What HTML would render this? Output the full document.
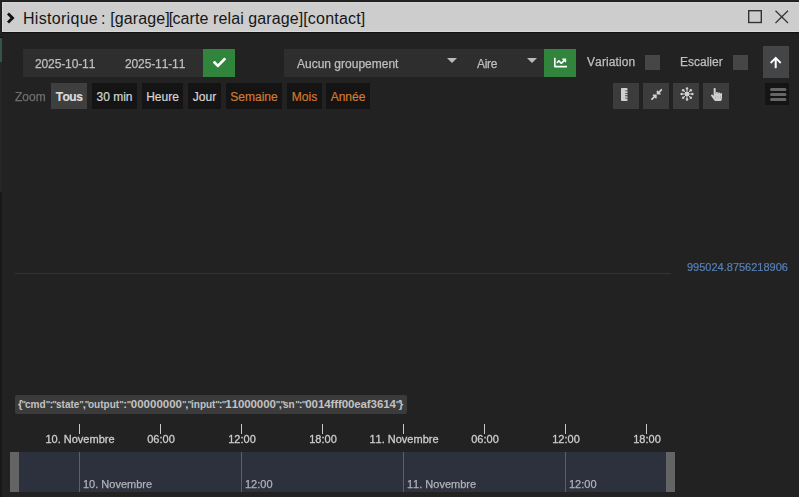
<!DOCTYPE html>
<html><head><meta charset="utf-8">
<style>
html,body{margin:0;padding:0;}
body{font-kerning:none;width:799px;height:497px;overflow:hidden;background:#222222;position:relative;font-family:"Liberation Sans",sans-serif;font-size:12px;color:#bfbfbf;}
.abs{position:absolute;}
#topb{left:0;top:0;width:799px;height:2px;background:linear-gradient(#242424 0,#242424 55%,#141414 100%);}
#leftb{left:0;top:0;width:2px;height:37px;background:linear-gradient(90deg,#242424 0,#242424 60%,#181818 100%);}
#sep{left:0;top:37px;width:2px;height:1px;background:#0c0c0c;}
#shadow{left:2px;top:32px;width:797px;height:2px;background:linear-gradient(#121212 0,#121212 50%,#1e1e1e 50%,#1e1e1e 100%);}
#teal{left:0;top:38px;width:2px;height:24px;background:#35524e;}
#leftb3{left:0;top:62px;width:2px;height:130px;background:#262626;}
#leftb2{left:0;top:192px;width:2px;height:305px;background:#181818;}
#title{left:2px;top:2px;width:797px;height:30px;background:#cdcdcd;box-sizing:border-box;border-left:1px solid #dadada;border-top:1px solid #d6d6d6;border-bottom:1px solid #d8d8d8;}
.box{background:#2e2e2e;}
.t{position:absolute;white-space:nowrap;font-size:12px;line-height:14px;will-change:transform;-webkit-text-stroke:0.25px;}
.t11{position:absolute;white-space:nowrap;font-size:11px;line-height:12px;will-change:transform;-webkit-text-stroke:0.2px;}
.zb{position:absolute;top:83px;height:26px;background:#141414;}
.zb span{-webkit-text-stroke:0.2px;position:absolute;left:0;right:0;top:7px;text-align:center;font-size:12px;line-height:14px;color:#d6d6d6;white-space:nowrap;}
.zb.o span{color:#d2792d;}
.ib{position:absolute;top:83px;height:26px;width:26px;background:#3c3c3c;}
.w{display:inline-block;transform:scaleX(0.87);transform-origin:0 50%;}
.q{font-size:9.5px;vertical-align:1.4px;font-style:normal;}
.tick{position:absolute;top:424px;width:1px;height:10px;background:#c8c8c8;}
.ax{-webkit-text-stroke:0.3px;will-change:transform;position:absolute;top:433px;width:100px;margin-left:-50px;text-align:center;white-space:nowrap;font-size:11px;line-height:12px;color:#cccccc;}
.ng{position:absolute;top:452px;width:1px;height:40px;background:#5a6070;}
.nl{-webkit-text-stroke:0.25px;will-change:transform;position:absolute;top:478px;white-space:nowrap;font-size:11px;line-height:12px;color:#b0b3b8;}
</style></head><body>
<div class="abs" id="topb"></div>
<div class="abs" id="leftb"></div>
<div class="abs" id="teal"></div>
<div class="abs" id="leftb2"></div>
<div class="abs" id="leftb3"></div>
<div class="abs" id="sep"></div>
<div class="abs" id="shadow"></div>
<div class="abs" id="title"></div>
<svg class="abs" style="left:6px;top:12px" width="10" height="12" viewBox="0 0 10 12"><path d="M2 1.5 L6.5 6 L2 10.5" fill="none" stroke="#111" stroke-width="2.9"/></svg>
<span class="abs" style="left:23px;top:9.5px;font-size:16px;line-height:17px;white-space:nowrap;color:#161616;letter-spacing:0.1px;"><span style="letter-spacing:0.3px">Historique</span><span style="margin-left:-1.5px"> : [garage</span><span style="letter-spacing:-0.8px">][</span>carte relai garage][<span style="letter-spacing:0.2px">contact</span>]</span>
<svg class="abs" style="left:747px;top:9px" width="16" height="16" viewBox="0 0 16 16"><rect x="1.7" y="1.7" width="12.6" height="11.8" fill="none" stroke="#333" stroke-width="1.4"/></svg>
<svg class="abs" style="left:774px;top:9px" width="16" height="16" viewBox="0 0 16 16"><path d="M1.5 1.7 L14 14 M14 1.7 L1.5 14" fill="none" stroke="#333" stroke-width="1.2"/></svg>

<!-- date range -->
<div class="abs box" style="left:23px;top:49px;width:180px;height:28px;"></div>
<span class="t" style="left:35px;top:57px;letter-spacing:-0.12px;">2025-10-11</span>
<span class="t" style="left:125px;top:57px;letter-spacing:-0.12px;">2025-11-11</span>
<div class="abs" style="left:203px;top:49px;width:32px;height:28px;background:#30843b;"></div>
<svg class="abs" style="left:212.5px;top:56px" width="13" height="13" viewBox="0 0 512 512"><path fill="#fff" d="M173.898 439.404l-166.4-166.4c-9.997-9.997-9.997-26.206 0-36.204l36.203-36.204c9.997-9.998 26.207-9.998 36.204 0L192 312.69 432.095 72.596c9.997-9.997 26.207-9.997 36.204 0l36.203 36.204c9.997 9.997 9.997 26.206 0 36.204l-294.4 294.401c-9.998 9.997-26.207 9.997-36.204-.001z"/></svg>

<!-- selects -->
<div class="abs box" style="left:284px;top:49px;width:260px;height:28px;"></div>
<span class="t" style="left:297px;top:57px;">Aucun groupement</span>
<div class="abs" style="left:447px;top:58px;width:0;height:0;border-left:5px solid transparent;border-right:5px solid transparent;border-top:5px solid #bcbcbc;"></div>
<span class="t" style="left:477px;top:57px;letter-spacing:-0.3px;">Aire</span>
<div class="abs" style="left:527px;top:58px;width:0;height:0;border-left:5px solid transparent;border-right:5px solid transparent;border-top:5px solid #bcbcbc;"></div>
<div class="abs" style="left:544px;top:49px;width:32px;height:28px;background:#30843b;"></div>
<svg class="abs" style="left:554px;top:56.2px" width="13" height="13" viewBox="0 0 512 512"><path fill="#fff" d="M496 384H64V80c0-8.84-7.16-16-16-16H16C7.16 64 0 71.16 0 80v336c0 17.67 14.33 32 32 32h464c8.84 0 16-7.16 16-16v-32c0-8.84-7.16-16-16-16zM464 96H345.94c-21.38 0-32.09 25.85-16.97 40.97l32.4 32.4L288 242.75l-73.37-73.37c-12.5-12.5-32.76-12.5-45.25 0l-68.69 68.69c-6.25 6.25-6.25 16.38 0 22.63l22.62 22.62c6.25 6.25 16.38 6.25 22.63 0L192 237.25l73.37 73.37c12.5 12.5 32.76 12.5 45.25 0l96-96 32.4 32.4c15.12 15.12 40.97 4.41 40.97-16.97V112c.01-8.84-7.15-16-15.99-16z"/></svg>
<span class="t" style="left:587px;top:55px;letter-spacing:0.1px;">Variation</span>
<div class="abs" style="left:645px;top:55px;width:15px;height:15px;background:#454648;"></div>
<span class="t" style="left:680px;top:55px;">Escalier</span>
<div class="abs" style="left:733px;top:55px;width:15px;height:15px;background:#454648;"></div>
<div class="abs" style="left:763px;top:46px;width:26px;height:32px;background:#444547;"></div>
<svg class="abs" style="left:770.2px;top:55.7px" width="11.4" height="13" viewBox="0 0 448 512"><path fill="#fff" d="M34.9 289.5l-22.2-22.2c-9.4-9.4-9.4-24.6 0-33.9L207 39c9.400-9.400 24.600-9.400 33.900 0l194.300 194.300c9.400 9.400 9.400 24.600 0 33.900L413 289.400c-9.500 9.500-25 9.300-34.300-.4L264 168.600V456c0 13.300-10.700 24-24 24h-32c-13.300 0-24-10.700-24-24V168.600L69.200 289.100c-9.300 9.800-24.800 10-34.300.4z"/></svg>

<!-- zoom row -->
<span class="t" style="left:15px;top:90px;color:#6e6e6e;">Zoom</span>
<div class="zb" style="left:51px;width:36px;background:#3f3f3f;"><span style="font-weight:bold;letter-spacing:-0.5px;color:#dcdcdc;">Tous</span></div>
<div class="zb" style="left:92px;width:45px;"><span>30 min</span></div>
<div class="zb" style="left:142px;width:41px;"><span>Heure</span></div>
<div class="zb" style="left:188px;width:33px;"><span>Jour</span></div>
<div class="zb o" style="left:226px;width:56px;"><span>Semaine</span></div>
<div class="zb o" style="left:287px;width:35px;"><span>Mois</span></div>
<div class="zb o" style="left:326px;width:44px;"><span>Année</span></div>

<div class="ib" style="left:613px;"></div>
<div class="ib" style="left:643px;"></div>
<div class="ib" style="left:673px;"></div>
<div class="ib" style="left:703px;"></div>
<svg class="abs" style="left:621px;top:88px" width="6.5" height="13" viewBox="0 0 256 512"><path fill="#d0d0d0" d="M168 416c-4.420 0-8-3.580-8-8v-16c0-4.420 3.580-8 8-8h88v-64h-88c-4.420 0-8-3.580-8-8v-16c0-4.420 3.580-8 8-8h88v-64h-88c-4.420 0-8-3.580-8-8v-16c0-4.420 3.580-8 8-8h88v-64h-88c-4.420 0-8-3.580-8-8v-16c0-4.420 3.580-8 8-8h88V32c0-17.670-14.330-32-32-32H32C14.330 0 0 14.330 0 32v448c0 17.670 14.330 32 32 32h192c17.670 0 32-14.330 32-32v-64h-88z"/></svg>
<svg class="abs" style="left:651px;top:87.8px" width="11.4" height="13" viewBox="0 0 448 512"><path fill="#d0d0d0" d="M4.686 427.314L104 328l-32.922-31.029C55.958 281.851 66.666 256 88.048 256h112C213.303 256 224 266.745 224 280v112c0 21.382-25.803 32.090-40.922 16.971L152 376l-99.314 99.314c-6.248 6.248-16.379 6.248-22.627 0L4.686 449.941c-6.248-6.248-6.248-16.379 0-22.627zM443.314 84.686L344 184l32.922 31.029c15.120 15.120 4.412 40.971-16.970 40.971h-112C234.697 256 224 245.255 224 232V120c0-21.382 25.803-32.090 40.922-16.971L296 136l99.314-99.314c6.248-6.248 16.379-6.248 22.627 0l25.373 25.373c6.248 6.248 6.248 16.379 0 22.627z"/></svg>
<svg class="abs" style="left:680px;top:87px" width="14" height="14" viewBox="-7 -7 14 14"><g fill="#d0d0d0" stroke="#d0d0d0"><circle r="2.3" stroke="none"/><g stroke-width="1"><path d="M0 -5.3V5.3M-5.300 0H5.300M-3.750 -3.750L3.750 3.750M-3.750 3.750L3.750 -3.750"/></g><g stroke="none"><circle cx="0" cy="-5.400" r="1.25"/><circle cx="0" cy="5.400" r="1.25"/><circle cx="5.400" cy="0" r="1.25"/><circle cx="-5.400" cy="0" r="1.25"/><circle cx="3.820" cy="3.820" r="1.25"/><circle cx="-3.820" cy="3.820" r="1.25"/><circle cx="3.820" cy="-3.820" r="1.25"/><circle cx="-3.820" cy="-3.820" r="1.25"/></g></g></svg>
<svg class="abs" style="left:710.6px;top:88px" width="11.4" height="13" viewBox="0 0 448 512"><path fill="#d0d0d0" d="M448 240v96c0 3.084-.356 6.159-1.063 9.162l-32 136C410.686 499.230 394.562 512 376 512H168a40.004 40.004 0 0 1-32.350-16.473l-127.997-176c-12.993-17.866-9.043-42.883 8.822-55.876 17.867-12.994 42.884-9.043 55.877 8.823L104 315.992V40c0-22.091 17.908-40 40-40s40 17.909 40 40v200h8v-40c0-22.091 17.908-40 40-40s40 17.909 40 40v40h8v-24c0-22.091 17.908-40 40-40s40 17.909 40 40v24h8c0-22.091 17.908-40 40-40s40 17.909 40 40zm-256 80h-8v96h8v-96zm88 0h-8v96h8v-96zm88 0h-8v96h8v-96z"/></svg>
<div class="abs" style="left:765px;top:83px;width:24px;height:22px;background:#141414;"></div>
<svg class="abs" style="left:765px;top:83px" width="24" height="22" viewBox="0 0 24 22"><path d="M6.5 6.5 H20 M6.5 11.5 H20 M6.5 16.5 H20" fill="none" stroke="#666" stroke-width="3" stroke-linecap="round"/></svg>

<!-- chart -->
<div class="abs" style="left:15px;top:273px;width:656px;height:1px;background:#333;"></div>
<span class="t11" style="left:687px;top:261px;color:#5680b8;">995024.8756218906</span>

<div class="abs" style="left:15px;top:394.5px;width:392px;height:19px;background:#3b3b3b;border-radius:2px;"></div>
<span class="abs" id="tip" style="left:18px;top:397px;white-space:nowrap;line-height:14px;font-size:11.5px;font-weight:bold;color:#c2c2c2;"><span style="letter-spacing:-0.9px">{<i class="q">&quot;</i></span><span class="w" style="width:20.58px">cmd</span><span style="letter-spacing:-0.9px"><i class="q">&quot;</i>:<i class="q">&quot;</i></span><span class="w" style="width:23.37px">state</span><span style="letter-spacing:-1.15px"><i class="q">&quot;</i>,<i class="q">&quot;</i></span><span class="w" style="width:31.12px">output</span><span style="letter-spacing:-0.4px"><i class="q">&quot;</i>:<i class="q">&quot;</i></span><span style="letter-spacing:0px">00000000</span><span style="letter-spacing:-1.15px"><i class="q">&quot;</i>,<i class="q">&quot;</i></span><span class="w" style="width:24.46px">input</span><span style="letter-spacing:-0.9px"><i class="q">&quot;</i>:<i class="q">&quot;</i></span><span style="letter-spacing:-0.1px">11000000</span><span style="letter-spacing:-1.5px"><i class="q">&quot;</i>,<i class="q">&quot;</i></span><span class="w" style="width:11.68px">sn</span><span style="letter-spacing:-0.9px"><i class="q">&quot;</i>:<i class="q">&quot;</i></span><span style="letter-spacing:-0.1px">0014fff00eaf3614</span><span style="letter-spacing:-1.5px"><i class="q">&quot;</i>}</span></span>

<!-- x axis -->
<div class="tick" style="left:79px"></div><div class="ax" style="left:80px">10. Novembre</div>
<div class="tick" style="left:160px"></div><div class="ax" style="left:161px">06:00</div>
<div class="tick" style="left:241px"></div><div class="ax" style="left:242px">12:00</div>
<div class="tick" style="left:322px"></div><div class="ax" style="left:323px">18:00</div>
<div class="tick" style="left:403px"></div><div class="ax" style="left:404px">11. Novembre</div>
<div class="tick" style="left:484px"></div><div class="ax" style="left:485px">06:00</div>
<div class="tick" style="left:565px"></div><div class="ax" style="left:566px">12:00</div>
<div class="tick" style="left:646px"></div><div class="ax" style="left:647px">18:00</div>

<!-- navigator -->
<div class="abs" style="left:19px;top:452px;width:647px;height:40px;background:#2d313d;"></div>
<div class="abs" style="left:10px;top:451.5px;width:9px;height:40px;background:#646464;"></div>
<div class="abs" style="left:666px;top:451.5px;width:9px;height:40px;background:#646464;"></div>
<div class="ng" style="left:79px"></div><span class="nl" style="left:83px">10. Novembre</span>
<div class="ng" style="left:241px"></div><span class="nl" style="left:245px">12:00</span>
<div class="ng" style="left:403px"></div><span class="nl" style="left:407px">11. Novembre</span>
<div class="ng" style="left:565px"></div><span class="nl" style="left:569px">12:00</span>
</body></html>
